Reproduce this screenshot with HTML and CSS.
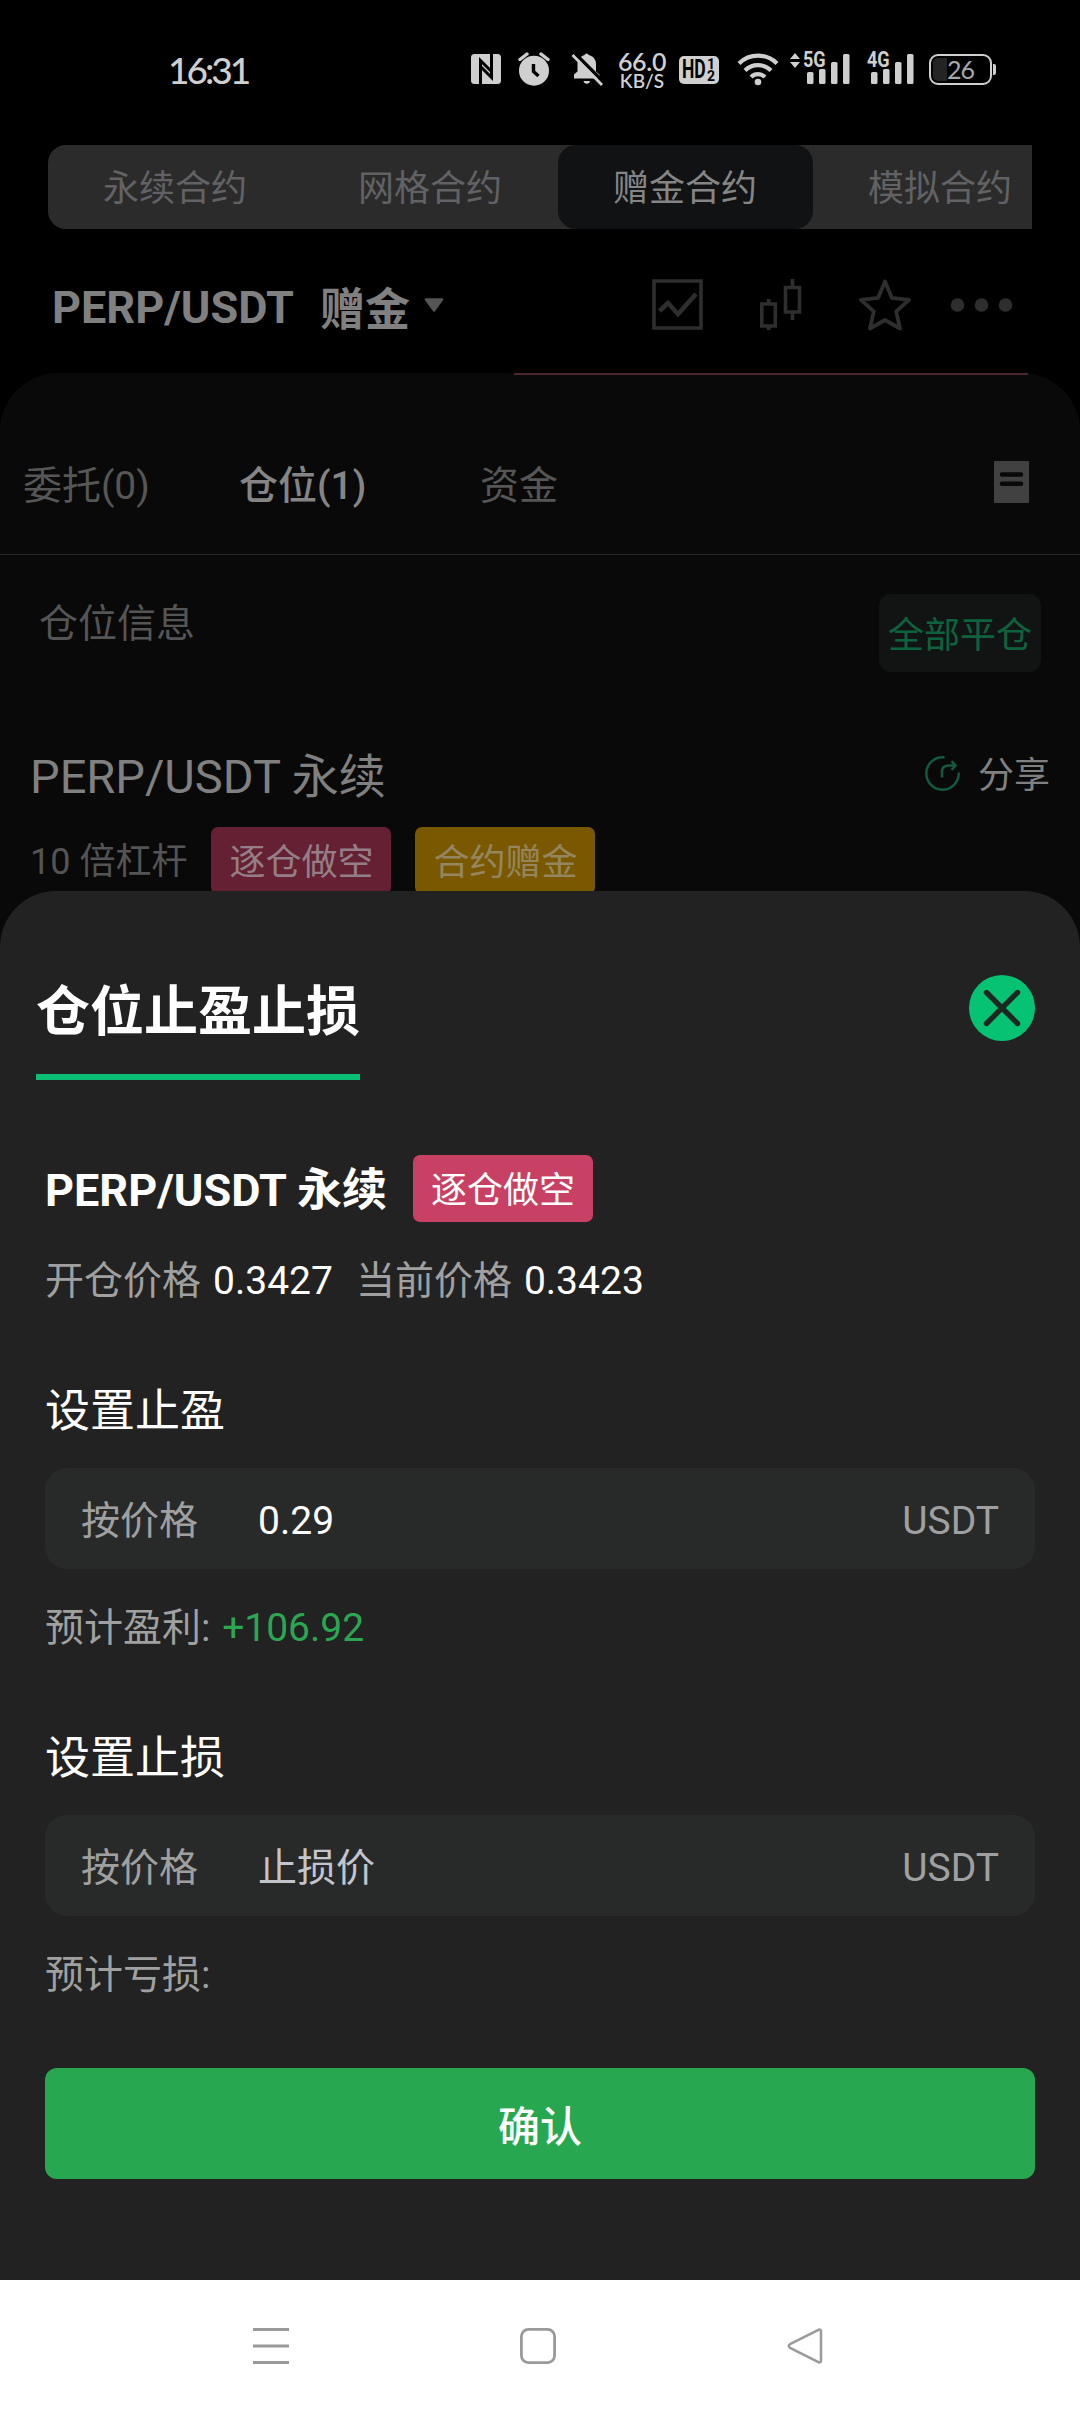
FILE: index.html
```html
<!DOCTYPE html>
<html lang="zh-CN">
<head>
<meta charset="utf-8">
<title>仓位止盈止损</title>
<link rel="stylesheet" href="styles.css">
</head>
<body>
<div class="screen">
  <header class="status">
    <span class="clock">16:31</span>
    <div class="status-icons">
      <svg class="i-nfc" width="30" height="30" viewBox="0 0 30 30"><rect width="30" height="30" rx="3.5" fill="#cfcfcf"/><path d="M9.500 30V6.500L20.500 17.500M20.500 0V23.500L9.500 12.500" fill="none" stroke="#000" stroke-width="3"/></svg>
      <svg class="i-alarm" width="32" height="34" viewBox="0 0 32 34"><circle cx="16" cy="18.700" r="15" fill="#cfcfcf"/><path d="M2 7.500L9 2M30 7.500L23 2" stroke="#cfcfcf" stroke-width="3.400" stroke-linecap="round"/><path d="M15.500 12v7.500l5 4.500" fill="none" stroke="#000" stroke-width="3.400"/></svg>
      <svg class="i-bell" width="32" height="34" viewBox="0 0 32 34"><path d="M3 26.500v-4l3.500-3V12C6.500 7 10 4 13.500 3a2.200 2.200 0 0 1 4.200 0C22 4 25 7.500 25 12v7.500l3.500 3v4z" fill="#cfcfcf"/><path d="M12.500 29h6.500a3.300 3.300 0 0 1-6.500 0z" fill="#cfcfcf"/><path d="M2 -.500L34 31.500" stroke="#000" stroke-width="3.500"/><path d="M1.500 3L31 33" stroke="#cfcfcf" stroke-width="2.800"/></svg>
      <div class="speed"><b>66.0</b><span>KB/S</span></div>
      <div class="hd"><span class="hd-text">HD</span><span class="hd-num"><i>1</i><i>2</i></span></div>
      <svg class="i-wifi" width="42" height="34" viewBox="0 0 42 34"><g fill="none" stroke="#cfcfcf" stroke-width="4.200"><path d="M2 11.500a27 27 0 0 1 38 0"/><path d="M8 18.500a18.500 18.500 0 0 1 26 0"/><path d="M14 25a10 10 0 0 1 14 0"/></g><circle cx="21" cy="30" r="3.300" fill="#cfcfcf"/></svg>
      <div class="signal five"><span>5G</span><svg width="62" height="34" viewBox="0 0 62 34" fill="#cfcfcf"><path d="M0 7l5-6 5 6zM0 10h10l-5 6z"/><rect x="17" y="20" width="6.500" height="12" rx="1.500"/><rect x="29" y="17" width="6.500" height="15" rx="1.500"/><rect x="41" y="10" width="6.500" height="22" rx="1.500"/><rect x="53" y="2" width="6.500" height="30" rx="1.500"/></svg></div>
      <div class="signal four"><span>4G</span><svg width="48" height="34" viewBox="0 0 48 34" fill="#cfcfcf"><rect x="4" y="20" width="6.500" height="12" rx="1.500"/><rect x="16" y="17" width="6.500" height="15" rx="1.500"/><rect x="28" y="10" width="6.500" height="22" rx="1.500"/><rect x="40" y="2" width="6.500" height="30" rx="1.500"/></svg></div>
      <div class="battery"><span>26</span></div>
      <i class="nub"></i>
    </div>
  </header>

  <nav class="segments">
    <span>永续合约</span><span>网格合约</span><span class="on">赠金合约</span><span>模拟合约</span>
  </nav>

  <div class="pair">
    <span class="pair-name">PERP/USDT</span><span class="pair-kind">赠金</span>
    <svg class="caret" width="20" height="15" viewBox="0 0 20 15"><path d="M2 1.500h16L10 12.500z" fill="#555" stroke="#555" stroke-width="2.500" stroke-linejoin="round"/></svg>
    <div class="tools">
      <svg width="51" height="51" viewBox="0 0 51 51" fill="none" stroke="#2e2e2e" stroke-width="3.600"><path d="M2 2h47v47H2z"/><path d="M7.500 32L16 24l10 11 18-20" stroke-width="4.600"/></svg>
      <svg class="candles" width="42" height="51" viewBox="0 0 42 51" fill="none" stroke="#2e2e2e" stroke-width="3.600"><path d="M1.800 25h13.500v22H1.800zM25.500 8.500h14V33h-14zM8.700 20v5M8.700 47v4M32.500 0v8.500M32.500 33v8"/></svg>
      <svg class="star" width="52" height="52" viewBox="0 0 52 52" fill="none" stroke="#2e2e2e" stroke-width="3.800" stroke-linejoin="round"><path d="M26 2.500l6.800 16.300 17.200 2-12.800 11.500L41 49.500 26 41 11 49.500l3.800-17.200L2 20.800l17.200-2z"/></svg>
      <svg class="dots" width="64" height="14" viewBox="0 0 64 14" fill="#2e2e2e"><circle cx="7.500" cy="7" r="6.800"/><circle cx="31.500" cy="7" r="6.800"/><circle cx="55.500" cy="7" r="6.800"/></svg>
    </div>
  </div>

  <main class="panel">
    <div class="accent"></div>
    <div class="tabs">
      <span>委托(0)</span><span class="on">仓位(1)</span><span>资金</span>
      <svg width="35" height="42" viewBox="0 0 35 42"><rect width="35" height="42" rx="1" fill="#414141"/><path d="M8 13.500h19M8 22.800h19" stroke="#090909" stroke-width="4.600" stroke-linecap="round"/></svg>
    </div>
    <div class="info"><span>仓位信息</span><button>全部平仓</button></div>
    <div class="position">
      <span>PERP/USDT 永续</span>
      <div class="share"><svg width="35" height="35" viewBox="0 0 35 35" fill="none" stroke="#13593d" stroke-width="2.500"><path d="M18.500 1.300A16.200 16.200 0 1 0 33.700 17.500" stroke-linecap="round"/><path d="M17 21.500v-6q0-5.500 6-6h7M26.500 5l4 4.500-4 4.500"/></svg><span>分享</span></div>
    </div>
    <div class="tags"><span>10 倍杠杆</span><b class="tag red">逐仓做空</b><b class="tag gold">合约赠金</b></div>
  </main>

  <section class="sheet">
    <div class="sheet-head">
      <h1>仓位止盈止损</h1>
      <svg width="66" height="66" viewBox="0 0 66 66"><circle cx="33" cy="33" r="33" fill="#06c373"/><path d="M17.500 17.500l31 31M48.500 17.500l-31 31" stroke="#1b2822" stroke-width="5.400" stroke-linecap="round"/></svg>
    </div>
    <div class="name"><strong>PERP/USDT 永续</strong><b class="tag bright">逐仓做空</b></div>
    <div class="prices"><span>开仓价格</span><em>0.3427</em><span>当前价格</span><em>0.3423</em></div>
    <h2>设置止盈</h2>
    <div class="field"><span>按价格</span><span class="value">0.29</span><span class="unit">USDT</span></div>
    <p class="estimate">预计盈利: <em>+106.92</em></p>
    <h2>设置止损</h2>
    <div class="field"><span>按价格</span><span class="value hint">止损价</span><span class="unit">USDT</span></div>
    <p class="estimate">预计亏损:</p>
    <button class="confirm">确认</button>
  </section>

  <footer class="navbar">
    <svg width="36" height="36" viewBox="0 0 36 36" stroke="#9a9a9a" stroke-width="3"><path d="M0 1.500h36M0 18h36M0 34.500h36"/></svg>
    <svg width="36" height="36" viewBox="0 0 36 36" fill="none" stroke="#9a9a9a" stroke-width="2.800"><rect x="1.400" y="1.400" width="33.200" height="33.200" rx="7"/></svg>
    <svg width="36" height="36" viewBox="0 0 36 36" fill="none" stroke="#9a9a9a" stroke-width="2.500" stroke-linejoin="round"><path d="M31.500 1.800L3 16.200q-2.500 1.800 0 3.600l28.500 14.400q2.500.8 2.500-1.700v-29q0-2.500-2.500-1.700z"/></svg>
  </footer>
</div>
</body>
</html>
```
FILE: styles.css
```css
* { box-sizing: border-box; }
body {
  margin: 0;
  background: #000;
  font-family: Roboto, "Noto Sans CJK SC", sans-serif;
}
svg { display: block; flex: none; }
h1, h2, p { margin: 0; }
em, i { font-style: normal; }
button { border: 0; padding: 0; font-family: inherit; }
span, b, strong { white-space: nowrap; }

.screen {
  position: relative;
  width: 1080px;
  height: 2412px;
  overflow: hidden;
  display: flex;
  flex-direction: column;
}

/* Status bar */
.status {
  height: 145px;
  padding: 52px 84px 0 168px;
  display: flex;
  justify-content: space-between;
  color: #cfcfcf;
}
.clock {
  font: 500 37px/36px Lato, sans-serif;
  letter-spacing: -3px;
}
.status-icons { display: flex; align-items: flex-start; height: 40px; }
.i-nfc { margin: 2px 17px 0 0; }
.i-alarm { margin-right: 21px; }
.i-bell { margin-right: 14px; }
.speed {
  width: 50px;
  margin-right: 12px;
  display: flex;
  flex-direction: column;
  align-items: center;
}
.speed b { font: 600 25px/19px Lato, sans-serif; letter-spacing: -0.3px; }
.speed span { font: 600 19px/19px Lato, sans-serif; }
.hd {
  width: 40px;
  height: 28px;
  margin: 4px 18px 0 0;
  border-radius: 5px;
  background: #cfcfcf;
  color: #000;
  display: flex;
  align-items: center;
  font: 700 25px/28px Roboto, sans-serif;
}
.hd-text { width: 25px; margin-left: 3px; transform: scaleX(0.7); transform-origin: left; }
.hd-num { display: flex; flex-direction: column; font-size: 14px; line-height: 12px; }
.i-wifi { margin-right: 11px; }
.signal { position: relative; }
.signal span {
  position: absolute;
  top: -1px;
  font: 700 22px/18px Roboto, sans-serif;
  transform: scaleX(0.82);
  transform-origin: left;
}
.five { margin-right: 15px; }
.five span { left: 13px; }
.four { margin-right: 14px; }
.four span { left: 0; }
.battery {
  width: 63px;
  height: 31px;
  margin-top: 2px;
  border: 2.500px solid #cfcfcf;
  border-radius: 9px;
  background: linear-gradient(90deg, #242424 14px, #000 14px) content-box;
  padding: 2px;
  text-align: center;
}
.battery span { font: 400 25px/23px Lato, sans-serif; letter-spacing: -1px; color: #a8a8a8; display: block; }
.nub { width: 3px; height: 11px; margin: 12px 0 0 1px; background: #cfcfcf; border-radius: 0 2px 2px 0; }

/* Contract type switch */
.segments {
  width: 984px;
  height: 84px;
  margin-left: 48px;
  display: flex;
  overflow: hidden;
  border-radius: 18px 0 0 18px;
  background: #2b2b2b;
  color: #626264;
  font-size: 36px;
  flex: none;
}
.segments span { flex: 0 0 255px; padding: 5px 1px 0 0; line-height: 79px; text-align: center; }
.segments .on { background: #101214; border-radius: 18px; color: #858585; }

/* Pair header */
.pair {
  height: 144px;
  flex: none;
  padding: 0 66px 1px 52px;
  display: flex;
  align-items: center;
  color: #808080;
  font-size: 45px;
  font-weight: 700;
}
.pair-name { margin-top: 13px; }
.pair-kind { margin: 11px 0 0 26px; }
.caret { margin: 9px 0 0 14px; }
.tools { display: flex; align-items: center; margin-left: auto; margin-top: 8px; }
.candles { margin-left: 57px; }
.star { margin-left: 57px; }
.dots { margin-left: 39px; }

/* Positions panel */
.panel {
  flex: none;
  height: 1907px;
  border-radius: 58px 58px 0 0;
  background: #090909;
}
.accent { height: 2px; width: 514px; margin-left: 514px; background: #4a2833; }
.tabs {
  height: 180px;
  border-bottom: 1px solid #282828;
  display: grid;
  grid-template-columns: 216px 241px 514px 35px;
  padding: 0 0 40px 23px;
  align-items: end;
  font-size: 39px;
  line-height: 56px;
  color: #565656;
}
.tabs .on { color: #858585; font-weight: 500; }
.tabs svg { margin-bottom: 11px; }
.info {
  height: 149px;
  padding: 39px 39px 0 39px;
  display: flex;
  justify-content: space-between;
  align-items: flex-start;
  font-size: 39px;
  line-height: 60px;
  color: #555;
}
.info button {
  width: 162px;
  height: 78px;
  padding-bottom: 2px;
  border-radius: 12px;
  background: #111413;
  color: #0d633f;
  font-size: 36px;
}
.position {
  height: 123px;
  padding: 38px 30px 0 30px;
  display: flex;
  justify-content: space-between;
  font-size: 47px;
  line-height: 69px;
  color: #808080;
}
.share { display: flex; gap: 18px; font-size: 36px; line-height: 68px; }
.share svg { margin-top: 14px; }
.tags {
  display: flex;
  gap: 24px;
  padding-left: 30px;
  font-size: 36px;
  line-height: 71px;
  color: #545454;
}
.tag {
  height: 67px;
  padding: 0 18px;
  border-radius: 7px;
  font-size: 36px;
  font-weight: 400;
  line-height: 72px;
}
.red { background: #662033; color: #937f85; }
.gold { background: #7a5800; color: #94865f; }
.bright { background: #c84064; color: #fff; }

/* Take profit / stop loss sheet */
.sheet {
  position: absolute;
  left: 0;
  top: 891px;
  width: 1080px;
  height: 1389px;
  padding: 0 45px;
  border-radius: 56px 56px 0 0;
  background: #222;
  color: #fff;
  display: flex;
  flex-direction: column;
}
.sheet-head {
  height: 189px;
  margin-left: -9px;
  padding-top: 80px;
  display: flex;
  justify-content: space-between;
  align-items: flex-start;
}
.sheet-head h1 {
  height: 109px;
  border-bottom: 6px solid #0abf73;
  font-size: 54px;
  line-height: 84px;
}
.sheet-head svg { margin-top: 4px; }
.name { display: flex; gap: 26px; height: 68px; margin-top: 75px; font-size: 45px; line-height: 72px; }
.prices {
  display: flex;
  margin-top: 29px;
  font-size: 39px;
  line-height: 58px;
  color: #a0a0a0;
}
.prices em { color: #fff; margin: 0 23px 0 12px; }
.sheet h2 {
  margin-top: 69px;
  font-size: 45px;
  font-weight: 400;
  line-height: 66px;
}
.field {
  height: 101px;
  margin-top: 23px;
  padding: 24px 36px 0;
  border-radius: 22px;
  background: #282a2a;
  display: flex;
  align-items: baseline;
  font-size: 39px;
  line-height: 58px;
  color: #a0a0a0;
}
.value { margin-left: 60px; color: #fff; }
.hint { color: #c4c4cc; }
.unit { margin-left: auto; }
.estimate { margin-top: 30px; font-size: 39px; line-height: 58px; color: #a0a0a0; }
.estimate em { color: #2ba651; margin-left: 2px; }
.confirm {
  height: 111px;
  margin-top: 64px;
  border-radius: 12px;
  background: #27a850;
  color: #fff;
  font-size: 42px;
  font-weight: 500;
}

/* System navigation */
.navbar {
  position: absolute;
  left: 0;
  bottom: 0;
  width: 1080px;
  height: 132px;
  padding: 0 257px 0 253px;
  background: #fff;
  display: flex;
  align-items: center;
  justify-content: space-between;
}
```
